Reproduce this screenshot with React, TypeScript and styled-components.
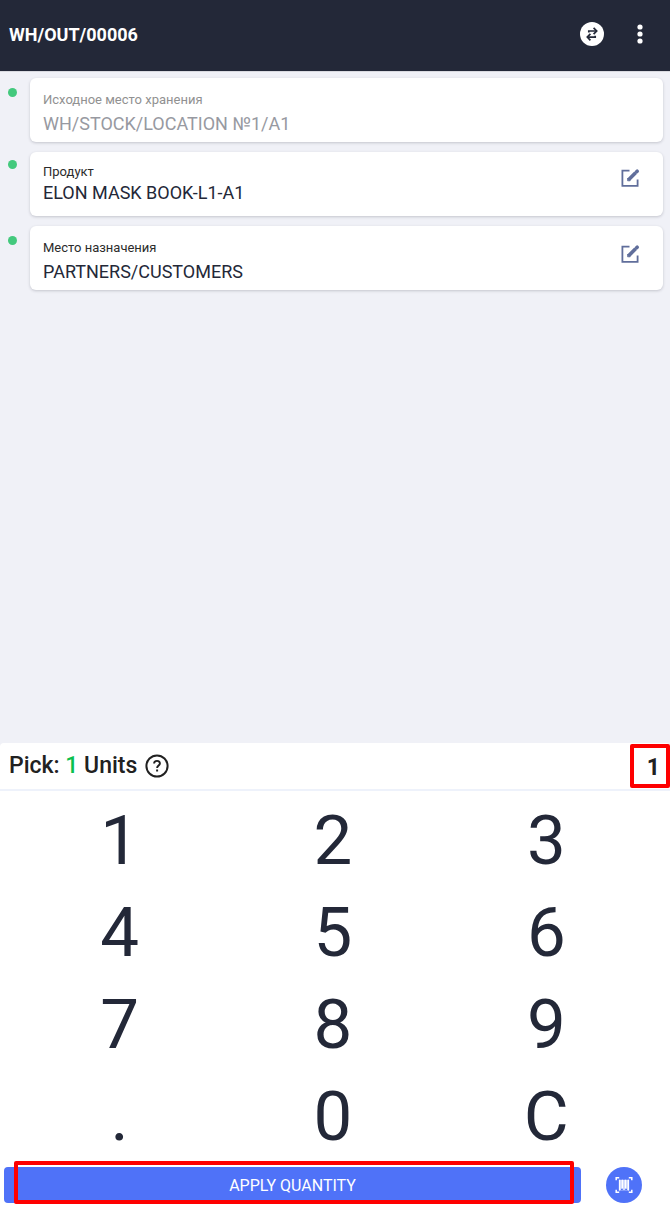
import React from "react";
import styled, { createGlobalStyle, css } from "styled-components";

const GlobalStyle = createGlobalStyle`
  *, *::before, *::after { box-sizing: border-box; }
  body {
    margin: 0;
    background: #f0f1f7;
    font-family: Roboto, "Noto Sans", sans-serif;
    color: #212121;
  }
  button, output { font-family: inherit; }
  svg { display: block; }
`;

const Screen = styled.div`
  display: flex;
  flex-direction: column;
  min-height: 100vh;
`;

const Header = styled.header`
  display: flex;
  align-items: center;
  height: 72px;
  padding: 0 18px 2px 9px;
  background: #232838;
  border-bottom: 1px solid #d9dae0;
`;

const Title = styled.h1`
  flex: 1;
  margin: 0;
  font-size: 18px;
  line-height: 24px;
  font-weight: 700;
  color: #fff;
`;

const IconButton = styled.button`
  display: flex;
  align-items: center;
  justify-content: center;
  width: 24px;
  height: 24px;
  padding: 0;
  border: 0;
  background: none;
  color: inherit;
  cursor: pointer;
`;

const HeaderActions = styled.div`
  display: flex;
  gap: 24px;
  padding-bottom: 2px;
  color: #fff;
`;

const Steps = styled.main`
  flex: 1;
  display: flex;
  flex-direction: column;
  gap: 10px;
  padding: 6px 7px 16px 8px;
`;

const Step = styled.section`
  display: flex;
  gap: 13px;
`;

const Dot = styled.span<{ $compact?: boolean }>`
  flex: none;
  width: 9px;
  height: 9px;
  margin-top: ${(p) => (p.$compact ? 8 : 10)}px;
  border-radius: 50%;
  background: #43c97d;
`;

const Card = styled.div<{ $compact?: boolean; $muted?: boolean }>`
  flex: 1;
  display: flex;
  justify-content: space-between;
  min-height: 64px;
  padding: ${(p) => (p.$compact ? 12 : 14)}px 21px 4px 13px;
  border-radius: 6px;
  background: #fff;
  box-shadow: 0 1px 3px rgba(35, 40, 56, 0.22);
  color: ${(p) => (p.$muted ? "#9799a1" : "#232838")};
`;

const Field = styled.div<{ $compact?: boolean }>`
  display: flex;
  flex-direction: column;
  gap: ${(p) => (p.$compact ? 1 : 4)}px;
`;

const Label = styled.span<{ $muted?: boolean }>`
  font-size: 13px;
  line-height: 16px;
  color: ${(p) => (p.$muted ? "#919191" : "#2b2b2b")};
`;

const Value = styled.span`
  font-size: 18px;
  line-height: 24px;
`;

const EditButton = styled(IconButton)`
  margin-top: 2px;
  color: #606e9b;
`;

const Panel = styled.section`
  background: #fff;
  border-radius: 4px 4px 0 0;
`;

const Summary = styled.div`
  display: flex;
  align-items: center;
  justify-content: space-between;
  height: 48px;
  padding-left: 9px;
  border-bottom: 2px solid #eef2fb;
`;

const Prompt = styled.div`
  display: flex;
  align-items: center;
  gap: 8px;
  font-size: 23px;
  line-height: 28px;
  font-weight: 500;
`;

const Count = styled.span`
  color: #0bbf4f;
`;

const highlight = css`
  border: 4px solid #fe0000;
  border-radius: 2px;
`;

const Entered = styled.output`
  ${highlight}
  display: flex;
  align-items: center;
  justify-content: flex-end;
  width: 40px;
  height: 44px;
  padding: 4px 6px 0 0;
  font-size: 23px;
  line-height: 28px;
  font-weight: 700;
`;

const Keypad = styled.div`
  display: grid;
  grid-template-columns: repeat(3, 1fr);
  padding: 4px 17px 0 13px;
`;

const Key = styled.button`
  height: 92px;
  padding: 0;
  border: 0;
  background: none;
  font-size: 69px;
  line-height: 92px;
  color: #232838;
  cursor: pointer;
`;

const Actions = styled.div`
  display: flex;
  align-items: center;
  gap: 25px;
  padding: 4px 28px 8px 4px;
`;

const ApplyWrap = styled.div`
  position: relative;
  flex: 1;
  display: flex;
`;

const Apply = styled.button`
  flex: 1;
  height: 36px;
  padding: 2px 0 0;
  border: 0;
  border-radius: 4px;
  background: #4f72f8;
  color: #fff;
  font-size: 16px;
  line-height: 20px;
  cursor: pointer;
`;

const ApplyMarker = styled.span`
  ${highlight}
  position: absolute;
  inset: -6px 7px -1px 10px;
  pointer-events: none;
`;

const ScanButton = styled(IconButton)`
  width: 36px;
  height: 36px;
  border-radius: 50%;
  background: #4f72f8;
  color: #fff;
`;

const SwapIcon = () => (
  <svg width="24" height="24" viewBox="0 0 24 24" aria-hidden="true">
    <circle cx="12" cy="12" r="12" fill="#fff" />
    <g fill="none" stroke="#232838" strokeWidth="1.7">
      <path d="M8.8 10.4V9H16" />
      <path d="M15.2 13.8V15.1H8" />
      <path d="M13.6 5.8 16.7 9l-3.1 3.2" />
      <path d="M10.4 11.9 7.3 15.1l3.1 3.2" />
    </g>
  </svg>
);

const MoreIcon = () => (
  <svg width="24" height="24" viewBox="0 0 24 24" fill="currentColor" aria-hidden="true">
    <circle cx="12" cy="5" r="2.6" />
    <circle cx="12" cy="12" r="2.6" />
    <circle cx="12" cy="19" r="2.6" />
  </svg>
);

const EditIcon = () => (
  <svg width="20" height="20" viewBox="0 0 20 20" fill="none" stroke="currentColor" aria-hidden="true">
    <path d="M9.5 2.6H2.4v15.2h15.2v-6.3" strokeWidth="1.8" />
    <path d="M8.6 11.8 15.6 4.8" strokeWidth="3.6" />
    <path d="M16.6 3.8 17.2 3.2" strokeWidth="3.6" strokeLinecap="round" />
    <path d="M7.6 10.2v2.6h2.6z" fill="currentColor" strokeWidth="0.8" />
  </svg>
);

const HelpIcon = () => (
  <svg width="24" height="24" viewBox="0 0 24 24" fill="none" stroke="#212121" aria-hidden="true">
    <circle cx="12" cy="12" r="10.6" strokeWidth="2" />
    <path
      d="M9.1 9.6C9.1 7.8 10.3 6.9 12 6.9s2.9 1 2.9 2.6c0 2-2.8 2.2-2.8 4.6"
      strokeWidth="1.9"
    />
    <path d="M11.1 15.5h2v2h-2z" fill="#212121" stroke="none" />
  </svg>
);

const BarcodeIcon = () => (
  <svg width="18" height="18" viewBox="0 0 18 18" fill="none" stroke="currentColor" aria-hidden="true">
    <path d="M1.2 4.2V1.8h3M13.8 1.8h3v2.4M16.8 13.8v2.4h-3M4.2 16.2h-3v-2.4" strokeWidth="1.5" />
    <path d="M3.8 3.8h10.4v10.6H3.8z" fill="currentColor" fillOpacity="0.72" stroke="none" />
    <path d="M4.6 3.8v10.6M7.4 3.8v8.6M10.4 3.8v8.6M13.4 3.8v10.6" strokeWidth="1.2" />
    <path d="M6 13.4h1.8M10.2 13.4H12" stroke="#4f72f8" strokeWidth="1.1" />
  </svg>
);

type StepData = {
  label: string;
  value: string;
  muted?: boolean;
  compact?: boolean;
};

const steps: StepData[] = [
  { label: "Исходное место хранения", value: "WH/STOCK/LOCATION №1/A1", muted: true },
  { label: "Продукт", value: "ELON MASK BOOK-L1-A1", compact: true },
  { label: "Место назначения", value: "PARTNERS/CUSTOMERS" },
];

const keys = ["1", "2", "3", "4", "5", "6", "7", "8", "9", ".", "0", "C"];

export default function App() {
  return (
    <>
      <GlobalStyle />
      <Screen>
        <Header>
          <Title>WH/OUT/00006</Title>
          <HeaderActions>
            <IconButton aria-label="Switch">
              <SwapIcon />
            </IconButton>
            <IconButton aria-label="More">
              <MoreIcon />
            </IconButton>
          </HeaderActions>
        </Header>
        <Steps>
          {steps.map(({ label, value, muted, compact }) => (
            <Step key={label}>
              <Dot $compact={compact} />
              <Card $compact={compact} $muted={muted}>
                <Field $compact={compact}>
                  <Label $muted={muted}>{label}</Label>
                  <Value>{value}</Value>
                </Field>
                {!muted && (
                  <EditButton aria-label={label}>
                    <EditIcon />
                  </EditButton>
                )}
              </Card>
            </Step>
          ))}
        </Steps>
        <Panel>
          <Summary>
            <Prompt>
              <span>
                Pick: <Count>1</Count> Units
              </span>
              <IconButton aria-label="Help">
                <HelpIcon />
              </IconButton>
            </Prompt>
            <Entered>1</Entered>
          </Summary>
          <Keypad>
            {keys.map((k) => (
              <Key key={k}>{k}</Key>
            ))}
          </Keypad>
          <Actions>
            <ApplyWrap>
              <Apply>APPLY QUANTITY</Apply>
              <ApplyMarker />
            </ApplyWrap>
            <ScanButton aria-label="Scan barcode">
              <BarcodeIcon />
            </ScanButton>
          </Actions>
        </Panel>
      </Screen>
    </>
  );
}
